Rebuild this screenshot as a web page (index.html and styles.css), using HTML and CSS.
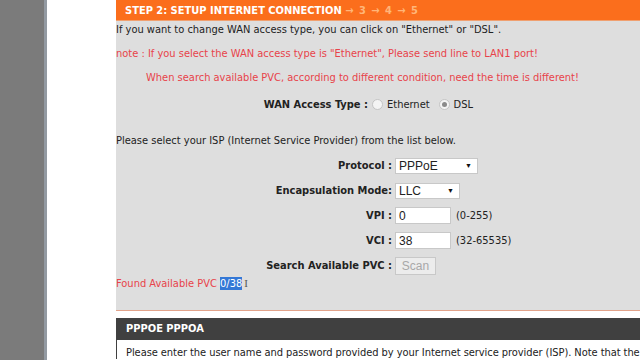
FILE: index.html
```html
<!DOCTYPE html>
<html lang="en">
<head>
    <meta charset="UTF-8">
    <meta name="viewport" content="width=device-width, initial-scale=1.0">
    <title>Setup Wizard</title>
    <link rel="stylesheet" href="styles.css">
</head>
<body>
    <div class="side"></div>
    <div class="gutter"></div>

    <div class="main">
        <div class="panel">
            <div class="panel-title">STEP 2: SETUP INTERNET CONNECTION <span class="next">&rarr; 3 &rarr; 4 &rarr; 5</span></div>
            <p class="line first">If you want to change WAN access type, you can click on "Ethernet" or "DSL".</p>
            <p class="line red">note : If you select the WAN access type is "Ethernet", Please send line to LAN1 port!</p>
            <p class="line red indent">When search available PVC, according to different condition, need the time is different!</p>

            <div class="wan-row">
                <span class="label">WAN Access Type :</span>
                <span class="radio"></span><span>Ethernet</span>
                <span class="radio checked"></span><span>DSL</span>
            </div>

            <p class="line isp">Please select your ISP (Internet Service Provider) from the list below.</p>

            <div class="form">
                <div class="label">Protocol :</div>
                <div><span class="select wide">PPPoE<i>&#9660;</i></span></div>

                <div class="label">Encapsulation Mode:</div>
                <div><span class="select">LLC<i>&#9660;</i></span></div>

                <div class="label">VPI :</div>
                <div><span class="input">0</span><span class="hint">(0-255)</span></div>

                <div class="label">VCI :</div>
                <div><span class="input">38</span><span class="hint">(32-65535)</span></div>

                <div class="label">Search Available PVC :</div>
                <div><span class="button">Scan</span></div>
            </div>

            <p class="line red found">Found Available PVC <span class="sel">0/38</span><span class="cursor">I</span></p>
        </div>

        <div class="section">
            <div class="section-title">PPPOE PPPOA</div>
            <p class="section-text">Please enter the user name and password provided by your Internet service provider (ISP). Note that the</p>
        </div>
    </div>
</body>
</html>
```

FILE: styles.css
```css
body {
    margin: 0;
    display: flex;
    height: 360px;
    overflow: hidden;
    font-family: "DejaVu Sans Condensed", "DejaVu Sans", sans-serif;
    font-size: 11px;
    color: #222;
    background: #fff;
}

.side {
    width: 44px;
    flex: none;
    background: #7b7b7b;
    border-right: 3px solid #939aa2;
}

.gutter {
    width: 69px;
    flex: none;
}

.main {
    flex: 1;
    min-width: 0;
    overflow: hidden;
}

.panel {
    background: #dedede;
    height: 310px;
    border-bottom: 1px solid #e2a38a;
    white-space: nowrap;
}

.panel-title {
    background: #fb6e1c;
    color: #fff;
    font-weight: bold;
    height: 20px;
    line-height: 21px;
    padding-left: 9px;
    border-bottom: 1px solid #f0a070;
}

.panel-title .next {
    color: #ffb679;
    letter-spacing: 1px;
}

.line {
    margin: 0;
    height: 24px;
    line-height: 24px;
}

.line.first {
    height: 18px;
    line-height: 18px;
    margin-bottom: 3px;
}

.red {
    color: #e8434a;
}

.indent {
    padding-left: 30px;
}

.wan-row {
    display: flex;
    align-items: center;
    height: 28px;
    gap: 4px;
}

.wan-row .label {
    width: 252px;
    text-align: right;
    font-weight: bold;
}

.radio {
    width: 9px;
    height: 9px;
    border: 1px solid #c4c4c4;
    border-radius: 50%;
    background: #f4f4f4;
    position: relative;
}

.radio.checked {
    margin-left: 5px;
}

.radio.checked::after {
    content: "";
    position: absolute;
    left: 2px;
    top: 2px;
    width: 5px;
    height: 5px;
    border-radius: 50%;
    background: #8a8a8a;
}

.isp {
    margin-top: 11px;
}

.form {
    display: grid;
    grid-template-columns: 276px auto;
    grid-auto-rows: 25px;
    align-items: center;
    column-gap: 3px;
}

.form .label {
    text-align: right;
    font-weight: bold;
}

.select,
.input,
.button {
    display: inline-flex;
    align-items: center;
    height: 16px;
    box-sizing: border-box;
    vertical-align: middle;
    background: #fff;
    border: 1px solid #c8c8c8;
    padding-left: 3px;
    font-family: "Liberation Sans", sans-serif;
    font-size: 12px;
}

.select {
    width: 65px;
    justify-content: space-between;
}

.select.wide {
    width: 83px;
}

.select i {
    font-style: normal;
    font-size: 7px;
    margin-right: 5px;
    color: #111;
}

.input {
    width: 56px;
    height: 17px;
}

.hint {
    margin-left: 5px;
    vertical-align: middle;
}

.button {
    width: 41px;
    height: 18px;
    justify-content: center;
    padding-left: 0;
    background: #ececec;
    color: #a8a8a8;
}

.found {
    height: 14px;
    line-height: 14px;
    margin-top: -2px;
}

.sel {
    background: #3478d6;
    color: #fff;
}

.cursor {
    font-family: "Liberation Serif", serif;
    color: #555;
    margin-left: 2px;
}

.section {
    margin-top: 7px;
    border-left: 1px solid #404040;
}

.section-title {
    background: #404040;
    color: #fff;
    font-weight: bold;
    height: 22px;
    line-height: 22px;
    padding-left: 9px;
}

.section-text {
    margin: 0;
    padding: 6px 0 0 9px;
    letter-spacing: -0.06px;
    white-space: nowrap;
}
```
